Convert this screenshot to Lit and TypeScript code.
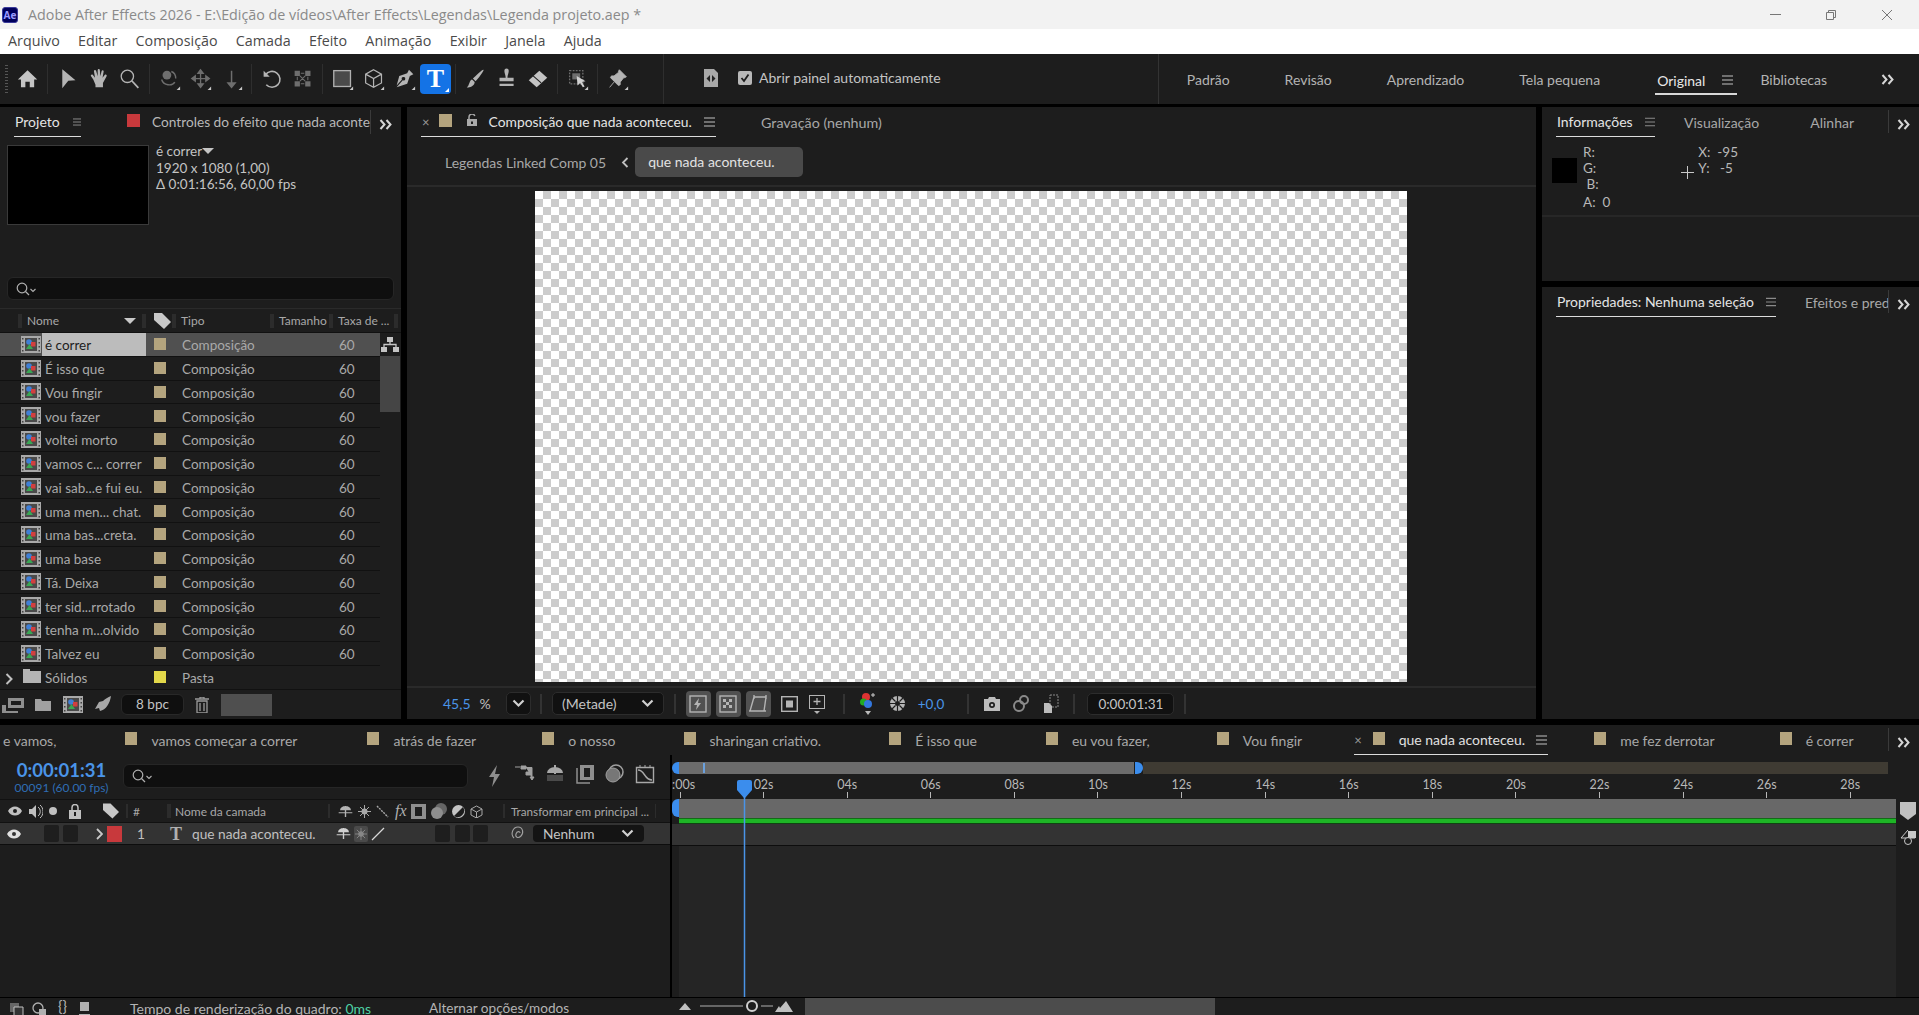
import { LitElement, html, css, svg, nothing } from 'lit'
import { customElement } from 'lit/decorators.js'

const ic = (w: number, h: number, vb: string, body: unknown) =>
  html`<svg width=${w} height=${h} viewBox=${vb} style="display:block;flex:none">${body}</svg>`

const G = '#b4b4b4'
const D = '#6e6e6e'

const corner = svg`<path d="M24 21v4h-4z" fill="#c8c8c8"/>`

const tools: Record<string, unknown> = {
  home: svg`<path d="M12 2.5 23 13h-3.500v9h-5v-6.500h-5V22h-5v-9H1z" fill="#c4c4c4"/>`,
  arrow: svg`<path d="M6 1.500 21 14l-8.200.6L6 23z" fill="${G}"/>`,
  hand: svg`<path d="M6 13 3.500 9.500c-1-1.500 1-2.800 2.100-1.500L8 11 6.800 4c-.3-1.800 2-2.300 2.500-.5L11 9.500V2.500c0-1.800 2.400-1.800 2.500 0L14 9.500l1.500-6c.4-1.700 2.600-1.200 2.300.6L16.500 11l2.500-3c1.200-1.300 3 .1 2 1.600L17 17v5H8.500v-3z" fill="${G}"/>`,
  zoom: svg`<circle cx="9.500" cy="9.500" r="7" fill="none" stroke="${G}" stroke-width="1.500"/><path d="m14.500 14.500 7.500 8" stroke="${G}" stroke-width="2"/>`,
  orbit: svg`<circle cx="9" cy="8" r="5" fill="${D}"/><path d="M3 13c2 7 12 8 15 3M14 4c3 1 5 4 5 8" fill="none" stroke="${D}" stroke-width="1.600"/>${corner}`,
  move: svg`<path d="M12 2v20M2 12h20M12 2 9 6h6zM12 22l-3-4h6zM2 12l4-3v6zM22 12l-4-3v6z" fill="${D}" stroke="${D}" stroke-width="1.500"/>${corner}`,
  down: svg`<path d="M12 3v18M8 17l4 5 4-5z" fill="${D}" stroke="${D}" stroke-width="1.700"/>${corner}`,
  rotate: svg`<path d="M5 8a9 9 0 1 1 1 11" fill="none" stroke="${G}" stroke-width="1.800"/><path d="M3 3v7h7z" fill="${G}"/>`,
  snap: svg`<path d="M3 3h6v6H3zM15 3h6v6h-6zM3 15h6v6H3zM15 15h6v6h-6z" fill="${D}"/><path d="M10 6h4M10 18h4M6 10v4M18 10v4M9 9l6 6M15 9l-6 6" stroke="${D}" stroke-width="1.200"/>`,
  rect: svg`<rect x="2" y="3" width="19" height="18" fill="#4a4a4a" stroke="#b0b0b0" stroke-width="1.500"/>${corner}`,
  cube: svg`<path d="M12 2 21 7v10l-9 5-9-5V7zM3 7l9 5 9-5M12 12v10" fill="none" stroke="${G}" stroke-width="1.400"/>${corner}`,
  pen: svg`<path d="M17 2 22 7l-4 2-3 9-12 4 7-8a2 2 0 1 0-1-1l-6 7 3-11 9-3z" fill="${G}"/>${corner}`,
  brush: svg`<path d="M21 2c1 1-6 10-9 13l-3-3c3-3 11-11 12-10zM8 13l3 3c0 4-5 7-9 6 2-1 2-3 3-5 .5-2 2-4 3-4z" fill="${G}"/>`,
  stamp: svg`<path d="M9.500 3a2.500 2.500 0 1 1 5 0c0 3-1.500 5-1.500 8h7v4H4v-4h7c0-3-1.500-5-1.500-8zM4 18h16v2.500H4z" fill="${G}"/>`,
  eraser: svg`<path d="M14 3 23 11 11 22 2 14z" fill="#c4c4c4"/><path d="m7 9 9 8" stroke="#1d1d1d" stroke-width="1.200"/>`,
  puppet: svg`<path d="M3 3h15v15H3z" fill="none" stroke="${D}" stroke-width="1.500" stroke-dasharray="2 1.500"/><path d="M6 6h9v7H6z" fill="${D}"/><path d="m11 9 10 6-4 1 3 5-2 1-3-5-3 3z" fill="#d0d0d0"/>${corner}`,
  pin: svg`<path d="M14 2 22 10l-2 1-1 0-4 5 0 3-2 1-9-9 1-2 3 0 5-4 0-1zM8 16l-5 6" fill="${G}" stroke="${G}" stroke-width="1"/>${corner}`,
}

const hamburger = html`<svg class="burger" width="11" height="10" viewBox="0 0 11 10"><path d="M0 1h11M0 5h11M0 9h11" stroke="#8a8a8a" stroke-width="1.300"/></svg>`
const chevrons = html`<svg class="more" width="14" height="11" viewBox="0 0 14 11"><path d="m1.500 1 4 4.500-4 4.500M7.500 1l4 4.500-4 4.500" fill="none" stroke="#d6d6d6" stroke-width="2"/></svg>`
const chevronDown = html`<svg width="13" height="9" viewBox="0 0 13 9"><path d="m1.500 1.500 5 5 5-5" fill="none" stroke="#d0d0d0" stroke-width="2.200"/></svg>`
const searchIcon = html`<svg width="22" height="14" viewBox="0 0 22 14"><circle cx="6" cy="6" r="4.800" fill="none" stroke="#b0b0b0" stroke-width="1.200"/><path d="m9.500 9.500 3.500 3.500" stroke="#b0b0b0" stroke-width="1.300"/><path d="m14.500 7 2.500 2.500L19.500 7" fill="none" stroke="#b0b0b0" stroke-width="1.100"/></svg>`
const compIcon = html`<svg width="20" height="17" viewBox="0 0 20 17" style="flex:none"><rect width="20" height="17" fill="#a9a9a9"/><path d="M1 2h1.500v1.500H1zM1 6h1.500v1.500H1zM1 10h1.500v1.500H1zM1 14h1.500v1.500H1zM17.500 2H19v1.500h-1.500zM17.500 6H19v1.500h-1.500zM17.500 10H19v1.500h-1.500zM17.500 14H19v1.500h-1.500z" fill="#444"/><rect x="4" y="2" width="12" height="13" fill="#4a4a4a"/><circle cx="8" cy="6" r="2.800" fill="#3f7fd6"/><rect x="10" y="6" width="4.500" height="4.500" fill="#d23f3f"/><path d="m8.500 8 3.500 5H5z" fill="#3aa655"/></svg>`

const projectItems = ['é correr', 'É isso que', 'Vou fingir', 'vou fazer', 'voltei morto', 'vamos c... correr', 'vai sab...e fui eu.', 'uma men... chat.', 'uma bas...creta.', 'uma base', 'Tá. Deixa', 'ter sid...rrotado', 'tenha m...olvido', 'Talvez eu']

const timelineTabs = [
  { label: 'e vamos,', gap: 69, swatch: false },
  { label: 'vamos começar a correr', gap: 70, swatch: true },
  { label: 'atrás de fazer', gap: 66, swatch: true },
  { label: 'o nosso', gap: 68, swatch: true },
  { label: 'sharingan criativo.', gap: 68, swatch: true },
  { label: 'É isso que', gap: 69, swatch: true },
  { label: 'eu vou fazer,', gap: 67, swatch: true },
  { label: 'Vou fingir', gap: 52, swatch: true },
]

const ticks = Array.from({ length: 15 }, (_, i) => (i === 0 ? '0:00s' : `${String(i * 2).padStart(2, '0')}s`))

@customElement('app-root')
export class AppRoot extends LitElement {
  static styles = css`
    :host {
      display: block;
      width: 1919px;
      height: 1015px;
      overflow: hidden;
      background: #000;
      font-family: Lato, 'Open Sans', sans-serif;
      font-size: 14px;
      color: #bdbdbd;
    }
    .app {
      display: flex;
      flex-direction: column;
      height: 1015px;
    }
    .title-bar {
      flex: none;
      height: 29px;
      background: #f2f2f2;
      display: flex;
      align-items: center;
      font-family: 'Open Sans', sans-serif;
      font-size: 14.300px;
      color: #8a8a8a;
    }
    .ae-logo {
      flex: none;
      width: 16px;
      height: 16px;
      margin: 0 10px 0 2px;
      border-radius: 3px;
      background: #00005b;
      border: 1px solid #3a3a9a;
      box-sizing: border-box;
      color: #9a9aff;
      font: 700 10px/14px 'Open Sans', sans-serif;
      text-align: center;
    }
    .win {
      margin-left: auto;
      display: flex;
      gap: 44px;
      padding-right: 26px;
      align-items: center;
    }
    .menu-bar {
      flex: none;
      height: 25px;
      background: #fff;
      display: flex;
      align-items: center;
      gap: 18.300px;
      padding: 0 0 2px 8px;
      box-sizing: border-box;
      font-family: 'Open Sans', sans-serif;
      font-size: 14.300px;
      color: #4a4a4a;
    }
    .toolbar {
      flex: none;
      height: 50px;
      background: #1d1d1d;
      display: flex;
      align-items: center;
      padding-left: 5px;
      box-sizing: border-box;
    }
    .grip {
      width: 3px;
      height: 28px;
      margin-right: 4px;
      background: repeating-linear-gradient(#555 0 1px, transparent 1px 3px);
    }
    .tool {
      width: 31px;
      height: 30px;
      display: flex;
      align-items: center;
      justify-content: center;
      flex: none;
    }
    .tool.active {
      background: #1473e6;
      border-radius: 4px;
      color: #fff;
      font: 700 26px/30px 'Liberation Serif', serif;
      position: relative;
    }
    .tool.active::after {
      content: '';
      position: absolute;
      right: 2px;
      bottom: 2px;
      border-left: 4px solid transparent;
      border-bottom: 4px solid #fff;
    }
    .tsep {
      flex: none;
      width: 1px;
      height: 30px;
      margin: 0 4px;
      background: #2e2e2e;
    }
    .tsep.wide {
      height: 100%;
      margin-left: 30px;
    }
    .auto-open {
      display: flex;
      align-items: center;
      margin-left: 36px;
      height: 100%;
      font-size: 14px;
      padding-bottom: 3px;
      box-sizing: border-box;
      color: #c4c4c4;
    }
    .check {
      width: 14px;
      height: 14px;
      margin: 0 7px 0 20px;
      border-radius: 2px;
      background: #b8b8b8;
      display: flex;
      align-items: center;
      justify-content: center;
    }
    .workspaces {
      margin-left: 217px;
      border-left: 1px solid #333;
      display: flex;
      align-items: center;
      height: 100%;
      padding-left: 28px;
      gap: 55px;
      font-size: 14px;
      position: relative;
      color: #b4b4b4;
    }
    .workspaces .current {
      color: #e8e8e8;
      display: flex;
      align-items: center;
      gap: 17px;
      height: 30px;
      margin-top: 2px;
      padding: 2px 4px 0 2px;
      border-bottom: 2px solid #d8d8d8;
      box-sizing: border-box;
      margin-right: -32px;
    }
    .workspaces .more {
      margin-left: -1px;
    }
    .panels {
      flex: none;
      margin-top: 3px;
      height: 612px;
      display: grid;
      grid-template-columns: 401px 1129px 377px;
      column-gap: 6px;
    }
    .panel {
      background: #1d1d1d;
      display: flex;
      flex-direction: column;
      overflow: hidden;
      min-height: 0;
    }
    .tabs {
      flex: none;
      height: 30px;
      display: flex;
      align-items: center;
      box-sizing: border-box;
      position: relative;
      white-space: nowrap;
    }
    .tab {
      display: flex;
      align-items: center;
      height: 30px;
      box-sizing: border-box;
      color: #a8a8a8;
    }
    .tab.on {
      color: #e4e4e4;
      border-bottom: 1.500px solid #dcdcdc;
    }
    .swatch {
      flex: none;
      width: 13px;
      height: 13px;
      background: #b4a47e;
    }
    .swatch.red {
      background: #c8393c;
    }
    .more-box {
      position: absolute;
      right: 8px;
      top: 9px;
    }
    .v-rule {
      position: absolute;
      left: 0;
      top: 3px;
      width: 1px;
      height: 23px;
      background: #3a3a3a;
    }
    /* project */
    .project-tabs .tab.on {
      margin-left: 14px;
      width: 67px;
      padding-left: 1px;
      gap: 13px;
    }
    .clip {
      width: 219px;
      margin-left: 12px;
      border-right: 1px solid #3a3a3a;
      box-sizing: border-box;
      height: 24px;
      line-height: 24px;
      font-size: 13.700px;
      color: #b8b8b8;
    }
    .prj-info {
      flex: none;
      height: 140px;
      display: flex;
      align-items: flex-start;
      padding: 8px 0 0 7px;
      box-sizing: border-box;
    }
    .thumb {
      width: 142px;
      height: 80px;
      background: #000;
      border: 1px solid #3a3a3a;
      box-sizing: border-box;
    }
    .prj-meta {
      margin: -2px 0 0 7px;
      font-size: 13.500px;
      line-height: 16.500px;
      color: #c4c4c4;
    }
    .drop {
      display: inline-block;
      border-left: 6px solid transparent;
      border-right: 6px solid transparent;
      border-top: 6px solid #c4c4c4;
      vertical-align: 2px;
    }
    .search {
      flex: none;
      height: 23px;
      box-sizing: border-box;
      background: #0f0f0f;
      border: 1px solid #262626;
      border-radius: 6px;
      display: flex;
      align-items: center;
      padding-left: 8px;
    }
    .prj-search {
      margin: 0 7px 8px;
    }
    .col-head {
      flex: none;
      height: 25px;
      border-top: 1px solid #2a2a2a;
      border-bottom: 1px solid #111;
      box-sizing: border-box;
      display: grid;
      grid-template-columns: 146px 26px 98px 60px 62px;
      font-size: 12px;
      color: #a8a8a8;
      align-items: center;
      white-space: nowrap;
    }
    .col-head > div {
      display: flex;
      align-items: center;
      gap: 5px;
      height: 100%;
    }
    .bar {
      flex: none;
      width: 4px;
      height: 14px;
      background: #2c2c2c;
    }
    .list {
      flex: none;
      display: flex;
      height: 356px;
    }
    .rows {
      width: 380px;
    }
    .row {
      height: 23.760px;
      box-sizing: border-box;
      border-bottom: 1px solid #111;
      display: grid;
      grid-template-columns: 42px 104px 36px 157px 41px;
      align-items: center;
      color: #a9a9a9;
      font-size: 13.500px;
    }
    .row > div {
      position: relative;
      top: 1px;
    }
    .row.sel {
      background: #505050;
    }
    .row.sel .name {
      background: #bcbcbc;
      color: #1c1c1c;
      height: 100%;
      top: 0;
      padding-top: 2px;
      box-sizing: border-box;
      display: flex;
      align-items: center;
    }
    .row .ico {
      display: flex;
      justify-content: flex-end;
      padding-right: 1px;
      top: 0;
    }
    .row .name {
      padding-left: 3px;
      white-space: nowrap;
      overflow: hidden;
    }
    .row .label {
      display: flex;
      padding-left: 8px;
      top: 0;
    }
    .row .swatch {
      width: 12px;
      height: 12px;
    }
    .scroll {
      width: 20px;
      display: flex;
      flex-direction: column;
    }
    .scroll .thumbbar {
      height: 56px;
      background: #454545;
    }
    .scroll .net {
      height: 23px;
      display: flex;
      align-items: center;
      justify-content: center;
    }
    .prj-foot {
      flex: 1;
      border-top: 1px solid #111;
      display: flex;
      align-items: center;
      padding-left: 2px;
    }
    .bpc {
      width: 63px;
      height: 21px;
      margin: 0 11px 0 10px;
      background: #0f0f0f;
      border-radius: 6px;
      border: 1px solid #282828;
      box-sizing: border-box;
      text-align: center;
      font-size: 13.500px;
      line-height: 19px;
      color: #c4c4c4;
    }
    .gray-block {
      width: 51px;
      height: 22px;
      margin-left: 12px;
      background: #4f4f4f;
    }
    /* comp */
    .comp-tabs .tab.on {
      margin-left: 14px;
      width: 295px;
    }
    .crumbs {
      flex: none;
      height: 50px;
      padding: 10px 0 8px 38px;
      box-sizing: border-box;
      display: flex;
      align-items: center;
      border-bottom: 2px solid #2a2a2a;
      color: #a8a8a8;
    }
    .pill {
      width: 168px;
      height: 30px;
      margin-left: 6px;
      padding-left: 13px;
      box-sizing: border-box;
      background: #4a4a4a;
      border-radius: 5px;
      line-height: 30px;
      color: #e2e2e2;
    }
    .viewer {
      flex: 1;
      display: flex;
      justify-content: center;
      padding: 4px 1px 0 0;
      box-sizing: border-box;
      min-height: 0;
    }
    .canvas {
      width: 872px;
      height: 491px;
      background: repeating-conic-gradient(#cccccc 0 25%, #fff 0 50%) 0 0 / 16px 16px;
    }
    .comp-foot {
      flex: none;
      height: 33px;
      border-top: 2px solid #2a2a2a;
      box-sizing: border-box;
      display: flex;
      align-items: center;
      padding-left: 36px;
      font-size: 14px;
    }
    .blue {
      color: #4a94e8;
    }
    .dark-btn {
      flex: none;
      height: 23px;
      background: #111;
      border: 1px solid #2c2c2c;
      border-radius: 5px;
      box-sizing: border-box;
      display: flex;
      align-items: center;
      justify-content: center;
      color: #c4c4c4;
    }
    .fsep {
      flex: none;
      width: 2px;
      height: 20px;
      background: #333;
      margin: 0 10px;
    }
    .vbtn {
      flex: none;
      width: 25px;
      height: 26px;
      margin-right: 5px;
      border-radius: 4px;
      display: flex;
      align-items: center;
      justify-content: center;
    }
    .vbtn.on {
      background: #515151;
    }
    /* right panels */
    .right {
      display: flex;
      flex-direction: column;
      gap: 6px;
      min-height: 0;
    }
    .info {
      flex: none;
      height: 174px;
    }
    .props {
      flex: 1;
    }
    .info-tabs .tab.on,
    .props-tabs .tab.on {
      margin-left: 14px;
      width: 99px;
      padding-left: 1px;
      gap: 12px;
    }
    .props-tabs .tab.on {
      width: 220px;
    }
    .readout {
      flex: none;
      height: 80px;
      border-bottom: 2px solid #272727;
      box-sizing: border-box;
      display: flex;
      font-size: 13.500px;
      line-height: 16px;
      color: #b8b8b8;
      padding: 7px 0 0 10px;
      position: relative;
    }
    .readout .chip {
      width: 25px;
      height: 25px;
      margin: 14px 6px 0 0;
      background: #000;
    }
    .readout .rgba div:last-child {
      margin-top: 2px;
    }
    .readout .xy {
      margin-left: 88px;
    }
    .readout .cross {
      position: absolute;
      left: 139px;
      top: 29px;
    }
    /* timeline */
    .timeline {
      flex: none;
      margin-top: 6px;
      height: 290px;
      background: #1d1d1d;
      display: flex;
      flex-direction: column;
      overflow: hidden;
    }
    .tl-tabs {
      padding-left: 3px;
      color: #a8a8a8;
    }
    .tl-tabs .swatch {
      margin-right: 14px;
      width: 12px;
    }
    .tl-tabs .tab.on {
      width: 194px;
      flex: none;
      margin-right: 46px;
      color: #e0e0e0;
    }
    .tl-body {
      flex: 1;
      display: flex;
      min-height: 0;
    }
    .tl-left {
      width: 670px;
      flex: none;
      display: flex;
      flex-direction: column;
      border-right: 2px solid #000;
    }
    .tl-head {
      flex: none;
      height: 44px;
      display: flex;
      align-items: center;
      position: relative;
    }
    .timecode {
      width: 123px;
      flex: none;
      text-align: center;
      padding-top: 2px;
    }
    .timecode b {
      display: block;
      font-size: 18.500px;
      line-height: 20px;
      color: #4a94e8;
      margin-top: -1px;
    }
    .timecode span {
      display: block;
      font-size: 12px;
      line-height: 14px;
      margin-top: 1px;
      color: #2f6db5;
    }
    .tl-search {
      width: 345px;
      height: 24px;
      margin-top: -2px;
    }
    .tl-switches {
      display: flex;
      gap: 5px;
      margin: -2px 0 0 14px;
    }
    .tl-switches > div {
      width: 25px;
      display: flex;
      justify-content: center;
    }
    .layer-head,
    .layer-row {
      flex: none;
      display: grid;
      grid-template-columns: 103px 23px 41px 161px 175px 167px;
      align-items: center;
      box-sizing: border-box;
    }
    .layer-head {
      height: 24px;
      border-top: 1px solid #111;
      border-bottom: 1px solid #111;
      font-size: 12px;
      color: #a8a8a8;
    }
    .layer-head .transform {
      font-size: 11.700px;
      gap: 6px;
    }
    .cell {
      display: flex;
      align-items: center;
      height: 100%;
      position: relative;
      white-space: nowrap;
    }
    .layer-row {
      height: 22px;
      background: #333;
      border-bottom: 1px solid #0d0d0d;
      font-size: 13.700px;
      color: #c0c0c0;
    }
    .sq {
      flex: none;
      width: 15px;
      height: 17px;
      background: #1e1e1e;
      border-radius: 2px;
    }
    .nenhum {
      width: 111px;
      height: 17px;
      margin-left: 15px;
      background: #141414;
      border-radius: 4px;
      display: flex;
      align-items: center;
      justify-content: space-between;
      padding: 0 10px;
      box-sizing: border-box;
      color: #c4c4c4;
    }
    .tl-right {
      flex: 1;
      display: flex;
      min-width: 0;
      background: #1d1d1d;
    }
    .time-area {
      width: 1224px;
      flex: none;
      position: relative;
      display: flex;
      flex-direction: column;
      overflow: hidden;
    }
    .nav {
      flex: none;
      height: 21px;
      width: 1216px;
      padding-top: 7px;
      box-sizing: border-box;
      display: flex;
      position: relative;
    }
    .nav > div {
      height: 12px;
    }
    .h-l {
      width: 7px;
      background: #3b8ded;
      border-radius: 6px 0 0 6px;
    }
    .h-r {
      width: 8px;
      margin-left: 1px;
      background: #3b8ded;
      border-radius: 0 6px 6px 0;
    }
    .nav .seg {
      width: 455px;
      background: #6c6c6c;
    }
    .nav .rest {
      flex: 1;
      background: #3f3b33;
    }
    .nav .mark {
      position: absolute;
      left: 31px;
      top: 8px;
      width: 2px;
      height: 10px;
      background: #6aa0dd;
    }
    .ruler {
      flex: none;
      height: 23px;
      display: flex;
      font-size: 12.500px;
      color: #b8b8b8;
      padding-top: 1px;
      box-sizing: border-box;
    }
    .ticks {
      display: flex;
      margin-left: -33.800px;
    }
    .tick {
      width: 83.600px;
      flex: none;
      display: flex;
      flex-direction: column;
      align-items: center;
      line-height: 15px;
    }
    .tick i {
      width: 1px;
      height: 6px;
      margin-top: 0;
      background: #b8b8b8;
    }
    .work {
      flex: none;
      height: 19px;
      display: flex;
    }
    .work .h-l {
      height: 18px;
    }
    .work .fill {
      flex: 1;
      background: #686868;
    }
    .green {
      flex: none;
      height: 6px;
      background: #1eb526;
      border-top: 1px solid #146a18;
      border-bottom: 1px solid #0f4411;
      box-sizing: border-box;
      margin-left: 7px;
    }
    .lane {
      flex: none;
      height: 21px;
      background: #333;
      border-bottom: 1px solid #0d0d0d;
    }
    .empty {
      flex: 1;
      background: #252525;
      border-left: 7px solid #1d1d1d;
    }
    .playhead {
      position: absolute;
      left: 65px;
      top: 25px;
      height: 220px;
    }
    .side {
      flex: 1;
      padding-top: 47px;
      display: flex;
      flex-direction: column;
      align-items: center;
      gap: 8px;
    }
    .status {
      flex: none;
      height: 18px;
      border-top: 1px solid #000;
      box-sizing: border-box;
      display: flex;
      align-items: center;
      font-size: 14px;
      color: #b4b4b4;
      padding: 3px 0 0 9px;
      overflow: hidden;
    }
    .status .stat-icons {
      display: flex;
      gap: 8px;
      width: 121px;
      flex: none;
      padding-top: 3px;
    }
    .status .msg {
      width: 299px;
      flex: none;
    }
    .status .msg em {
      font-style: normal;
      color: #4fd3a6;
    }
    .status .opts {
      width: 250px;
      flex: none;
      font-size: 13.600px;
    }
    .zoomer {
      display: flex;
      align-items: center;
      flex: none;
      width: 126px;
      margin-top: -4px;
    }
    .hscroll {
      width: 410px;
      height: 20px;
      flex: none;
      margin-top: -3px;
      background: #4c4c4c;
    }
  `

  private tool(name: string, size = 22) {
    return html`<div class="tool">${ic(size, size, '0 0 25 25', tools[name])}</div>`
  }

  private renderChrome() {
    return html`
      <div class="title-bar">
        <div class="ae-logo">Ae</div>
        Adobe After Effects 2026 - E:\\Edição de vídeos\\After Effects\\Legendas\\Legenda projeto.aep *
        <div class="win">
          <svg width="11" height="2"><rect width="11" height="1" fill="#777"/></svg>
          <svg width="12" height="12" viewBox="0 0 12 12"><path d="M1.500 3.500h7v7h-7zM3.500 3.500v-2h7v7h-2" fill="none" stroke="#777"/></svg>
          <svg width="12" height="12" viewBox="0 0 12 12"><path d="m1 1 10 10M11 1 1 11" stroke="#777"/></svg>
        </div>
      </div>
      <div class="menu-bar">
        ${['Arquivo', 'Editar', 'Composição', 'Camada', 'Efeito', 'Animação', 'Exibir', 'Janela', 'Ajuda'].map((m) => html`<span>${m}</span>`)}
      </div>
      <div class="toolbar">
        <div class="grip"></div>
        ${this.tool('home')}<div class="tsep"></div>
        ${this.tool('arrow')}${this.tool('hand')}${this.tool('zoom')}<div class="tsep"></div>
        ${this.tool('orbit')}${this.tool('move')}${this.tool('down')}<div class="tsep"></div>
        ${this.tool('rotate')}${this.tool('snap')}<div class="tsep"></div>
        ${this.tool('rect')}${this.tool('cube')}${this.tool('pen')}
        <div class="tool active">T</div><div class="tsep"></div>
        ${this.tool('brush')}${this.tool('stamp')}${this.tool('eraser')}<div class="tsep"></div>
        ${this.tool('puppet')}<div class="tsep"></div>${this.tool('pin')}
        <div class="tsep wide"></div>
        <div class="auto-open">
          <svg width="14" height="18" viewBox="0 0 14 18"><path d="M0 0h10l4 4v14H0z" fill="#a8a8a8"/><path d="M6 6 2.500 9.500 6 13zM8 6l3.500 3.500L8 13z" fill="#222"/></svg>
          <div class="check"><svg width="10" height="10" viewBox="0 0 10 10"><path d="m1.500 5 2.500 3L8.500 1.500" fill="none" stroke="#1d1d1d" stroke-width="1.800"/></svg></div>
          Abrir painel automaticamente
        </div>
        <div class="workspaces">
          <span>Padrão</span><span>Revisão</span><span>Aprendizado</span><span>Tela pequena</span>
          <span class="current">Original ${hamburger}</span>
          <span>Bibliotecas</span>
          ${chevrons}
        </div>
      </div>
    `
  }

  private renderProject() {
    return html`
      <section class="panel">
        <div class="tabs project-tabs">
          <div class="tab on">Projeto ${hamburger}</div>
          <div class="swatch red" style="margin:-3px 0 0 46px"></div>
          <div class="clip">Controles do efeito que nada aconte</div>
          <div class="more-box">${chevrons}</div>
        </div>
        <div class="prj-info">
          <div class="thumb"></div>
          <div class="prj-meta">
            <div>é correr<span class="drop"></span></div>
            <div>1920 x 1080 (1,00)</div>
            <div>Δ 0:01:16:56, 60,00 fps</div>
          </div>
        </div>
        <div class="search prj-search">${searchIcon}</div>
        <div class="col-head">
          <div><span class="bar" style="margin-left:18px"></span>Nome
            <span class="drop" style="margin-left:auto;margin-right:1px;border-top-color:#c8c8c8;vertical-align:0"></span><span class="bar"></span></div>
          <div style="padding-left:9px">
            <svg width="17" height="16" viewBox="0 0 17 16" style="flex:none;margin-left:-1px"><path d="M0 0h8l9 9-7 7-10-9z" fill="#c8c8c8"/></svg>
          </div>
          <div><span class="bar"></span>Tipo</div>
          <div><span class="bar"></span>Tamanho</div>
          <div><span class="bar" style="margin-left:-1px"></span>Taxa de ...<span class="bar"></span></div>
        </div>
        <div class="list">
          <div class="rows">
            ${projectItems.map(
              (name, i) => html`
                <div class="row ${i === 0 ? 'sel' : ''}">
                  <div class="ico">${compIcon}</div>
                  <div class="name">${name}</div>
                  <div class="label"><div class="swatch"></div></div>
                  <div>Composição</div>
                  <div>60</div>
                </div>
              `,
            )}
            <div class="row" style="height:23px;border:0">
              <div class="ico" style="justify-content:space-between">
                <svg width="8" height="12" viewBox="0 0 8 12" style="margin:4px 0 0 5px"><path d="m1.500 1 5 5-5 5" fill="none" stroke="#c0c0c0" stroke-width="2"/></svg>
                <svg width="18" height="14" viewBox="0 0 18 14"><path d="M0 2V0h7v2h11v12H0z" fill="#b4b4b4"/></svg>
              </div>
              <div class="name">Sólidos</div>
              <div class="label"><div class="swatch" style="background:#e2d84a"></div></div>
              <div>Pasta</div>
              <div></div>
            </div>
          </div>
          <div class="scroll">
            <div class="net">
              <svg width="18" height="15" viewBox="0 0 18 15"><path d="M6 0h6v5H6zM0 10h6v5H0zM12 10h6v5h-6z" fill="#c4c4c4"/><path d="M9 5v3M3 10V7.500h12V10" fill="none" stroke="#c4c4c4" stroke-width="1.300"/></svg>
            </div>
            <div class="thumbbar"></div>
          </div>
        </div>
        <div class="prj-foot">
          <svg width="22" height="16" viewBox="0 0 22 16" style="flex:none;margin-right:11px"><path d="M6 1h16v10H6zM0 8h4v6h12v2H0z" fill="#8e8e8e"/><path d="M9 4h10v4H9z" fill="#1d1d1d"/></svg>
          <svg width="16" height="12" viewBox="0 0 16 12" style="flex:none;margin-right:12px"><path d="M0 2V0h6l1 2h9v10H0z" fill="#a0a0a0"/></svg>
          ${compIcon}
          <svg width="17" height="17" viewBox="0 0 17 17" style="flex:none;margin-left:11px"><path d="M17 0C16 7 12 14 6 15l-1-3-4 1 4-7 4-1C11 3 14 1 17 0z" fill="#a8a8a8"/></svg>
          <div class="bpc">8 bpc</div>
          <svg width="14" height="16" viewBox="0 0 14 16" style="flex:none"><path d="M0 2h14M5 2V0h4v2M2 4h10v12H2zM5 6v8M9 6v8" fill="none" stroke="#9a9a9a" stroke-width="1.300"/></svg>
          <div class="gray-block"></div>
        </div>
      </section>
    `
  }

  private renderComp() {
    const grey = '#b4b4b4'
    return html`
      <section class="panel">
        <div class="tabs comp-tabs">
          <div class="tab on">
            <span style="margin:0 9px 0 1px;font-size:13px;color:#9a9a9a">×</span>
            <div class="swatch" style="margin-top:-3px"></div>
            <svg width="10" height="12" viewBox="0 0 10 12" style="margin:-3px 12px 0 15px"><path d="M0 5h10v7H0z" fill="#aaa"/><path d="M2 5V3a3 3 0 0 1 5.800-1" fill="none" stroke="#aaa" stroke-width="1.500"/><rect x="4" y="7.500" width="2" height="2.500" fill="#1d1d1d"/></svg>
            <span style="font-size:13.850px">Composição que nada aconteceu.</span>
            <span style="margin-left:auto;padding-right:1px;display:flex">${hamburger}</span>
          </div>
          <div class="tab" style="margin-left:45px;font-size:14.300px">Gravação (nenhum)</div>
        </div>
        <div class="crumbs">
          Legendas Linked Comp 05
          <svg width="8" height="11" viewBox="0 0 8 11" style="margin-left:15px"><path d="M6.500 1 2 5.500 6.500 10" fill="none" stroke="#c0c0c0" stroke-width="1.800"/></svg>
          <div class="pill">que nada aconteceu.</div>
        </div>
        <div class="viewer"><div class="canvas"></div></div>
        <div class="comp-foot">
          <span class="blue">45,5</span><span style="margin-left:9px">%</span>
          <div class="dark-btn" style="width:25px;margin-left:15px">${chevronDown}</div>
          <div class="fsep" style="margin:0 10px 0 9px"></div>
          <div class="dark-btn" style="width:112px;gap:24px;font-size:14px">(Metade) ${chevronDown}</div>
          <div class="fsep"></div>
          <div class="vbtn on">${ic(18, 18, '0 0 18 18', svg`<rect x="1" y="1" width="16" height="16" fill="none" stroke="${grey}" stroke-width="1.400"/><path d="M10 3 5 10h3l-1 5 5-7H9z" fill="${grey}"/>`)}</div>
          <div class="vbtn on">${ic(18, 18, '0 0 18 18', svg`<rect x="1" y="1" width="16" height="16" fill="none" stroke="${grey}" stroke-width="1.400"/><path d="M4 4h3v3H4zM10 4h3v3h-3zM7 7h3v3H7zM4 10h3v3H4zM10 10h3v3h-3z" fill="${grey}"/>`)}</div>
          <div class="vbtn on" style="margin-right:6px">${ic(20, 20, '0 0 20 20', svg`<path d="M6 3h12l-2 14H2zM6 1v4M1 17h4M18 1v4M14 17h4" fill="none" stroke="${grey}" stroke-width="1.400"/>`)}</div>
          <div class="vbtn" style="margin-right:3px">${ic(17, 16, '0 0 17 16', svg`<rect x=".7" y=".7" width="15.600" height="14.600" fill="none" stroke="${grey}" stroke-width="1.400"/><rect x="5" y="4.500" width="7" height="7" fill="${grey}"/>`)}</div>
          <div class="vbtn">${ic(18, 20, '0 0 18 20', svg`<rect x="1.500" y="1.500" width="15" height="13" fill="none" stroke="${grey}"/><path d="M9 4v7M5.500 7.500h7" stroke="${grey}" stroke-width="1.300"/><path d="M6 17h6l-3 3z" fill="${grey}"/>`)}</div>
          <div class="fsep" style="margin:0 15px 0 8px"></div>
          ${ic(16, 24, '0 0 16 24', svg`<circle cx="6" cy="5" r="4" fill="#d33"/><circle cx="3.500" cy="10" r="3.500" fill="#2a2"/><circle cx="8" cy="12" r="4" fill="#37d"/><path d="M11 3h4M13 1v4" stroke="#ccc"/><path d="M5 19h6l-3 4z" fill="#bbb"/>`)}
          <div style="margin-left:13px">${ic(17, 17, '0 0 17 17', svg`<circle cx="8.500" cy="8.500" r="7.500" fill="${grey}"/><path d="M8.500 1v5M16 8.500h-5M8.500 16v-5M1 8.500h5M3 3l3.500 3.500M14 3l-3.500 3.500M14 14l-3.500-3.500M3 14l3.500-3.500" stroke="#1d1d1d" stroke-width="1.200"/><circle cx="8.500" cy="8.500" r="2.500" fill="#1d1d1d"/>`)}</div>
          <span class="blue" style="margin-left:12px;font-size:13.500px">+0,0</span>
          <div class="fsep" style="margin:0 15px 0 23px"></div>
          ${ic(16, 14, '0 0 16 14', svg`<path d="M0 2h4l1-2h6l1 2h4v12H0z" fill="#bdbdbd"/><circle cx="8" cy="8" r="3" fill="#1d1d1d"/><circle cx="8" cy="8" r="1.300" fill="#bdbdbd"/>`)}
          <div style="margin-left:13px">${ic(16, 17, '0 0 16 17', svg`<circle cx="6" cy="11" r="5" fill="none" stroke="#8a8a8a" stroke-width="2"/><circle cx="11" cy="5" r="4" fill="none" stroke="#8a8a8a" stroke-width="2"/>`)}</div>
          <div style="margin-left:14px">${ic(16, 19, '0 0 16 19', svg`<path d="M7 1h8v12H7z" fill="none" stroke="#8a8a8a" stroke-dasharray="2 1"/><path d="M1 9h5l3 3v7H1z" fill="#bdbdbd"/>`)}</div>
          <div class="fsep" style="margin:0 12px 0 14px"></div>
          <div class="dark-btn" style="width:87px;height:22px;font-size:13.500px">0:00:01:31</div>
          <div class="fsep" style="margin-left:10px"></div>
        </div>
      </section>
    `
  }

  private renderRight() {
    return html`
      <div class="right">
        <section class="panel info">
          <div class="tabs info-tabs">
            <div class="tab on">Informações ${hamburger}</div>
            <div class="tab" style="margin-left:29px">Visualização</div>
            <div class="tab" style="margin-left:51px">Alinhar</div>
            <div class="v-rule" style="left:346px"></div>
            <div class="more-box">${chevrons}</div>
          </div>
          <div class="readout">
            <div class="chip"></div>
            <div class="rgba">
              <div>R:</div><div>G:</div><div>&nbsp;B:</div>
              <div>A: &nbsp;0</div>
            </div>
            <div class="xy">
              <div>X: &nbsp;-95</div>
              <div>Y: &nbsp; -5</div>
            </div>
            <svg class="cross" width="13" height="13" viewBox="0 0 13 13"><path d="M6.500 0v13M0 6.500h13" stroke="#c8c8c8"/></svg>
          </div>
        </section>
        <section class="panel props">
          <div class="tabs props-tabs">
            <div class="tab on">Propriedades: Nenhuma seleção ${hamburger}</div>
            <div class="tab" style="margin-left:29px">Efeitos e pred</div>
            <div class="v-rule" style="left:346px"></div>
            <div class="more-box">${chevrons}</div>
          </div>
        </section>
      </div>
    `
  }

  private renderTimeline() {
    const g = '#a8a8a8'
    const sw = '#b4b4b4'
    return html`
      <section class="timeline">
        <div class="tabs tl-tabs">
          ${timelineTabs.map(
            (t) => html`
              ${t.swatch ? html`<div class="swatch" style="margin-top:-3px"></div>` : nothing}
              <div class="tab" style="margin-right:${t.gap}px">${t.label}</div>
            `,
          )}
          <div class="tab on">
            <span style="margin-right:11px;font-size:13px;color:#9a9a9a">×</span>
            <div class="swatch" style="margin-top:-3px"></div>
            que nada aconteceu.
            <span style="margin-left:auto;padding-right:1px;display:flex">${hamburger}</span>
          </div>
          <div class="swatch" style="margin-top:-3px"></div>
          <div class="tab" style="margin-right:65px">me fez derrotar</div>
          <div class="swatch" style="margin-top:-3px"></div>
          <div class="tab">é correr</div>
          <div class="v-rule" style="left:1888px"></div>
          <div class="more-box">${chevrons}</div>
        </div>
        <div class="tl-body">
          <div class="tl-left">
            <div class="tl-head">
              <div class="timecode"><b>0:00:01:31</b><span>00091 (60.00 fps)</span></div>
              <div class="search tl-search">${searchIcon}</div>
              <div class="tl-switches">
                <div>${ic(13, 24, '0 0 13 24', svg`<path d="M9 1 1 13h5l-2 10 8-13H7z" fill="#8e8e8e"/>`)}</div>
                <div>${ic(22, 18, '0 0 22 18', svg`<path d="M1 3h5M7 2h5v3H7zM12 3.500h6V14M14 9h4M12 8h5v3h-5zM16 13h4l-2 3z" fill="#a0a0a0" stroke="#a0a0a0"/>`)}</div>
                <div>${ic(22, 18, '0 0 22 18', svg`<path d="M3 9a8 6 0 0 1 16 0zM10 1h2v9h-2z" fill="#a8a8a8"/><rect x="3" y="11" width="16" height="6" fill="#4a4a4a"/>`)}</div>
                <div>${ic(20, 20, '0 0 20 20', svg`<path d="M5 1h14v15H5z" fill="#8e8e8e"/><path d="M2 4v15h13" fill="none" stroke="#8e8e8e" stroke-width="1.500"/><path d="M9 4h6v9H9z" fill="#1d1d1d"/>`)}</div>
                <div>${ic(20, 20, '0 0 20 20', svg`<circle cx="11" cy="8" r="7" fill="none" stroke="#a0a0a0" stroke-width="1.500"/><circle cx="8" cy="11" r="7" fill="#777" stroke="#a0a0a0"/>`)}</div>
                <div>${ic(20, 20, '0 0 20 20', svg`<path d="M1.500 3.500h17v15h-17z" fill="none" stroke="#a8a8a8" stroke-width="1.400"/><path d="M3 6c7 0 6 10 14 10" fill="none" stroke="#a8a8a8" stroke-width="1.400"/><path d="M5 1v3M10 1v3M15 1v3" stroke="#a8a8a8"/>`)}</div>
              </div>
            </div>
            <div class="layer-head">
              <div class="cell" style="gap:7px;padding-left:8px">
                ${ic(14, 10, '0 0 14 10', svg`<path d="M0 5c3-6 11-6 14 0-3 6-11 6-14 0z" fill="#c0c0c0"/><circle cx="7" cy="5" r="2" fill="#1d1d1d"/>`)}
                ${ic(14, 15, '0 0 14 15', svg`<path d="M0 5h3l4-4v13l-4-4H0z" fill="#c0c0c0"/><path d="M9 3c3 2 3 7 0 9M11 1c4 3 4 10 0 13" fill="none" stroke="#c0c0c0"/>`)}
                <svg width="8" height="8" style="margin:0 5px 0 -1px;flex:none"><circle cx="4" cy="4" r="4" fill="#c0c0c0"/></svg>
                ${ic(12, 15, '0 0 12 15', svg`<path d="M0 6h12v9H0z" fill="#c0c0c0"/><path d="M3 6V3.500a3 3 0 0 1 6 0V6" fill="none" stroke="#c0c0c0" stroke-width="1.500"/><rect x="5" y="8" width="2" height="4" fill="#1d1d1d"/>`)}
              </div>
              <div class="cell">
                ${ic(16, 16, '0 0 17 16', svg`<path d="M0 0h8l9 9-7 7-10-9z" fill="#c8c8c8"/>`)}
              </div>
              <div class="cell" style="gap:5px"><span class="bar" style="width:2px"></span>#</div>
              <div class="cell" style="gap:4px"><span class="bar"></span>Nome da camada</div>
              <div class="cell" style="gap:5px">
                <span class="bar" style="width:2px;margin-right:3px"></span>
                ${ic(15, 15, '0 0 22 18', svg`<path d="M3 7a8 6 0 0 1 16 0zM10 1h2v16h-2zM1 10h20v1.500H1z" fill="${sw}"/>`)}
                ${ic(13, 13, '0 0 13 13', svg`<circle cx="6.500" cy="6.500" r="3" fill="${g}"/><path d="M6.500 0v13M0 6.500h13M2 2l9 9M11 2l-9 9" stroke="${g}"/>`)}
                ${ic(13, 13, '0 0 13 13', svg`<path d="m1 1 11 11" stroke="${g}" stroke-width="1.400" stroke-dasharray="2 1"/>`)}
                <span style="font:italic 16px/16px 'Liberation Serif',serif;color:#b0b0b0;margin:0 -1px 0 1px">fx</span>
                ${ic(15, 15, '0 0 15 15', svg`<rect width="15" height="15" fill="#8e8e8e"/><rect x="4" y="3" width="7" height="9" fill="#1d1d1d"/>`)}
                ${ic(16, 16, '0 0 16 16', svg`<circle cx="10" cy="6" r="6" fill="#666"/><circle cx="6" cy="10" r="6" fill="#8e8e8e"/>`)}
                ${ic(13, 13, '0 0 13 13', svg`<circle cx="6.500" cy="6.500" r="6.500" fill="#c4c4c4"/><path d="M11 2 2 11a6.500 6.500 0 0 0 9-9z" fill="#1d1d1d"/>`)}
                ${ic(13, 13, '0 0 13 13', svg`<path d="M6.500 1 12 4v6l-5.500 3L1 10V4zM1 4l5.500 3L12 4M6.500 7v6" fill="none" stroke="${g}"/>`)}
              </div>
              <div class="cell transform"><span class="bar" style="width:2px"></span>Transformar em principal ...<span class="bar" style="width:1px"></span></div>
            </div>
            <div class="layer-row">
              <div class="cell" style="padding-left:7px">
                ${ic(14, 10, '0 0 14 10', svg`<path d="M0 5c3-6 11-6 14 0-3 6-11 6-14 0z" fill="#e0e0e0"/><circle cx="7" cy="5" r="2" fill="#333"/>`)}
                <span class="sq" style="margin-left:23px"></span><span class="sq" style="margin-left:4px"></span>
                <svg width="7" height="12" viewBox="0 0 7 12" style="margin-left:18px;flex:none"><path d="m1 1 5 5-5 5" fill="none" stroke="#c8c8c8" stroke-width="1.800"/></svg>
              </div>
              <div class="cell"><div class="swatch red" style="width:15px;height:16px;margin-left:4px"></div></div>
              <div class="cell" style="padding-left:11px">1</div>
              <div class="cell">
                <span style="font:700 18px/18px 'Liberation Serif',serif;color:#b0b0b0;margin:0 10px 0 3px">T</span>que nada aconteceu.
              </div>
              <div class="cell" style="padding-left:8px">
                ${ic(15, 15, '0 0 22 18', svg`<path d="M3 7a8 6 0 0 1 16 0zM10 1h2v16h-2zM1 10h20v1.500H1z" fill="#d0d0d0"/>`)}
                <span class="sq" style="height:16px;background:#4a4a4a;margin:0 3px;display:flex;align-items:center;justify-content:center;width:14px">${ic(12, 12, '0 0 13 13', svg`<circle cx="6.500" cy="6.500" r="3" fill="#888"/><path d="M6.500 0v13M0 6.500h13M2 2l9 9M11 2l-9 9" stroke="#888"/>`)}</span>
                ${ic(14, 14, '0 0 14 14', svg`<path d="M1 13 13 1" stroke="#d8d8d8" stroke-width="1.300"/>`)}
                <span class="sq" style="margin-left:50px"></span><span class="sq" style="margin-left:5px"></span><span class="sq" style="margin-left:3px"></span>
              </div>
              <div class="cell" style="padding-left:7px">
                ${ic(15, 15, '0 0 15 15', svg`<path d="M4 12C0 8 3 1 8 1s6 6 3 9-6 1-5-2 4-3 4-1" fill="none" stroke="#a0a0a0" stroke-width="1.100"/>`)}
                <div class="nenhum" style="margin-left:8px">Nenhum ${chevronDown}</div>
              </div>
            </div>
          </div>
          <div class="tl-right">
            <div class="time-area">
              <div class="nav">
                <div class="h-l"></div><div class="seg"></div><div class="h-r"></div><div class="rest"></div>
                <div class="mark"></div>
              </div>
              <div class="ruler">
                <div class="ticks">${ticks.map((t) => html`<div class="tick">${t}<i></i></div>`)}</div>
              </div>
              <div class="work"><div class="h-l"></div><div class="fill"></div></div>
              <div class="green"></div>
              <div class="lane"></div>
              <div class="empty"></div>
              <svg class="playhead" width="15" viewBox="0 0 15 220" height="220">
                <path d="M0 2a2 2 0 0 1 2-2h11a2 2 0 0 1 2 2v8l-7 8h-1l-7-8z" fill="#3b8ded"/>
                <path d="M7.500 16v204" stroke="#4a94e8" stroke-width="1.500"/>
              </svg>
            </div>
            <div class="side">
              <svg width="16" height="18" viewBox="0 0 16 18"><path d="M0 0h16v12l-8 6-8-6z" fill="#c0c0c0"/></svg>
              <svg width="18" height="16" viewBox="0 0 18 16" style="margin-top:1px"><path d="M9 1 2 9h14" fill="none" stroke="#c8c8c8"/><path d="M9 2h8v7H9z" fill="#c8c8c8"/><circle cx="9" cy="12" r="3.500" fill="#1d1d1d" stroke="#c8c8c8"/></svg>
            </div>
          </div>
        </div>
        <div class="status">
          <div class="stat-icons">
            ${ic(15, 15, '0 0 15 15', svg`<path d="M1 1h9v9H1z" fill="#666"/><path d="M5 5h9v9H5z" fill="#333" stroke="#c0c0c0"/>`)}
            ${ic(15, 15, '0 0 15 15', svg`<circle cx="6" cy="6" r="5" fill="none" stroke="#b0b0b0" stroke-width="1.300"/><path d="M7 7h7v7H7z" fill="#b0b0b0"/>`)}
            <span style="line-height:14px;font-size:15px;margin-top:-3px;width:15px;text-align:center">{}</span>
            ${ic(15, 15, '0 0 15 15', svg`<path d="M2 0h9v9H2zM1 12h11v3H1z" fill="#b0b0b0"/>`)}
          </div>
          <div class="msg">Tempo de renderização do quadro: <em>0ms</em></div>
          <div class="opts">Alternar opções/modos</div>
          <div class="zoomer">
            ${ic(12, 7, '0 0 12 7', svg`<path d="M6 0 12 7H0z" fill="#c0c0c0"/>`)}
            <svg width="78" height="16" viewBox="0 0 78 16" style="margin-left:6px;flex:none"><path d="M3 8h43M64 8h12" stroke="#666" stroke-width="2"/><circle cx="55" cy="8" r="5" fill="none" stroke="#d0d0d0" stroke-width="2"/></svg>
            ${ic(18, 11, '0 0 18 11', svg`<path d="M11 0 18 11H0l4-6 1 2z" fill="#c0c0c0"/>`)}
          </div>
          <div class="hscroll"></div>
        </div>
      </section>
    `
  }

  render() {
    return html`
      <div class="app">
        ${this.renderChrome()}
        <div class="panels">${this.renderProject()}${this.renderComp()}${this.renderRight()}</div>
        ${this.renderTimeline()}
      </div>
    `
  }
}
